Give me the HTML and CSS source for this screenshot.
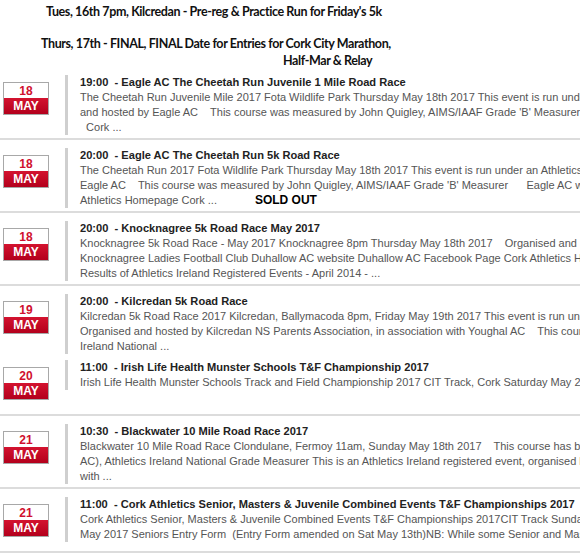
FILE: index.html
```html
<!DOCTYPE html>
<html>
<head>
<meta charset="utf-8">
<link rel="stylesheet" href="styles.css">
</head>
<body>
<div class="notice">
  <p class="line n1">Tues, 16th 7pm, Kilcredan - Pre-reg &amp; Practice Run for Friday's 5k</p>
  <p class="line n2">Thurs, 17th - FINAL, FINAL Date for Entries for Cork City Marathon,</p>
  <p class="line n3">Half-Mar &amp; Relay</p>
</div>
<div class="events">
  <div class="event">
    <div class="date"><span class="day">18</span><span class="mon">MAY</span></div>
    <div class="content">
      <div class="title">19:00&nbsp; - Eagle AC The Cheetah Run Juvenile 1 Mile Road Race</div>
      <div class="desc">The Cheetah Run Juvenile Mile 2017 Fota Wildlife Park Thursday May 18th 2017 This event is run under an Athletics Ireland
and hosted by Eagle AC    This course was measured by John Quigley, AIMS/IAAF Grade 'B' Measurer    Eagle AC
  Cork ...</div>
    </div>
  </div>
  <div class="event">
    <div class="date"><span class="day">18</span><span class="mon">MAY</span></div>
    <div class="content">
      <div class="title">20:00&nbsp; - Eagle AC The Cheetah Run 5k Road Race</div>
      <div class="desc">The Cheetah Run 2017 Fota Wildlife Park Thursday May 18th 2017 This event is run under an Athletics Ireland
Eagle AC    This course was measured by John Quigley, AIMS/IAAF Grade 'B' Measurer      Eagle AC website
Athletics Homepage Cork ...<span class="sold">SOLD OUT</span></div>
    </div>
  </div>
  <div class="event">
    <div class="date"><span class="day">18</span><span class="mon">MAY</span></div>
    <div class="content">
      <div class="title">20:00&nbsp; - Knocknagree 5k Road Race May 2017</div>
      <div class="desc">Knocknagree 5k Road Race - May 2017 Knocknagree 8pm Thursday May 18th 2017    Organised and hosted by
Knocknagree Ladies Football Club Duhallow AC website Duhallow AC Facebook Page Cork Athletics Homepage
Results of Athletics Ireland Registered Events - April 2014 - ...</div>
    </div>
  </div>
  <div class="event joined">
    <div class="date"><span class="day">19</span><span class="mon">MAY</span></div>
    <div class="content">
      <div class="title">20:00&nbsp; - Kilcredan 5k Road Race</div>
      <div class="desc">Kilcredan 5k Road Race 2017 Kilcredan, Ballymacoda 8pm, Friday May 19th 2017 This event is run under an Athletics
Organised and hosted by Kilcredan NS Parents Association, in association with Youghal AC    This course was
Ireland National ...</div>
    </div>
  </div>
  <div class="event after-joined">
    <div class="date"><span class="day">20</span><span class="mon">MAY</span></div>
    <div class="content">
      <div class="title">11:00&nbsp; - Irish Life Health Munster Schools T&amp;F Championship 2017</div>
      <div class="desc">Irish Life Health Munster Schools Track and Field Championship 2017 CIT Track, Cork Saturday May 20th 2017</div>
    </div>
  </div>
  <div class="event">
    <div class="date"><span class="day">21</span><span class="mon">MAY</span></div>
    <div class="content">
      <div class="title">10:30&nbsp; - Blackwater 10 Mile Road Race 2017</div>
      <div class="desc">Blackwater 10 Mile Road Race Clondulane, Fermoy 11am, Sunday May 18th 2017    This course has been measured by
AC), Athletics Ireland National Grade Measurer This is an Athletics Ireland registered event, organised by
with ...</div>
    </div>
  </div>
  <div class="event">
    <div class="date"><span class="day">21</span><span class="mon">MAY</span></div>
    <div class="content">
      <div class="title">11:00&nbsp; - Cork Athletics Senior, Masters &amp; Juvenile Combined Events T&amp;F Championships 2017</div>
      <div class="desc">Cork Athletics Senior, Masters &amp; Juvenile Combined Events T&amp;F Championships 2017CIT Track Sunday 21st
May 2017 Seniors Entry Form  (Entry Form amended on Sat May 13th)NB: While some Senior and Masters</div>
    </div>
  </div>
</div>
</body>
</html>
```
FILE: styles.css
```css
html, body {
  margin: 0;
  padding: 0;
  background: #fff;
  overflow: hidden;
}
body {
  width: 580px;
  font-family: "Liberation Sans", Arial, sans-serif;
  font-size: 11px;
}
.notice {
  padding-top: 3px;
  height: 64px;
  font-family: Lato, "Liberation Sans", sans-serif;
  font-weight: bold;
  font-size: 12.5px;
  letter-spacing: -0.4px;
  color: #111;
}
.notice .line {
  margin: 0;
  line-height: 17px;
  white-space: nowrap;
}
.notice .n1 { margin-left: 46px; }
.notice .n2 { margin-left: 41px; margin-top: 15px; }
.notice .n3 { margin-left: 283px; }

.events {
  width: 760px;
}
.event {
  display: flex;
  align-items: flex-start;
  padding: 8px 0 3px;
  border-bottom: 2px solid #dcdcdc;
}
.event.joined {
  border-bottom: none;
  padding-bottom: 0;
}
.event.after-joined {
  padding-top: 6px;
}
.date {
  flex: none;
  width: 44px;
  margin: 7px 16px 11px 3px;
  border: 1px solid #a8a8a8;
  display: flex;
  flex-direction: column;
  font-weight: bold;
  font-size: 12px;
  text-align: center;
}
.day {
  height: 15px;
  line-height: 16px;
  color: #d0102e;
  background: #fff;
}
.mon {
  height: 16px;
  line-height: 16px;
  color: #fff;
  background: linear-gradient(#d3132f, #b3001c);
}
.content {
  border-left: 3px solid #cfcfcf;
  padding-left: 12px;
}
.title {
  font-weight: bold;
  font-size: 11.1px;
  color: #222;
  line-height: 15px;
  white-space: nowrap;
}
.desc {
  color: #555;
  line-height: 15px;
  white-space: pre;
}
.sold {
  margin-left: 38px;
  font-weight: bold;
  color: #000;
  font-size: 12px;
}
```
